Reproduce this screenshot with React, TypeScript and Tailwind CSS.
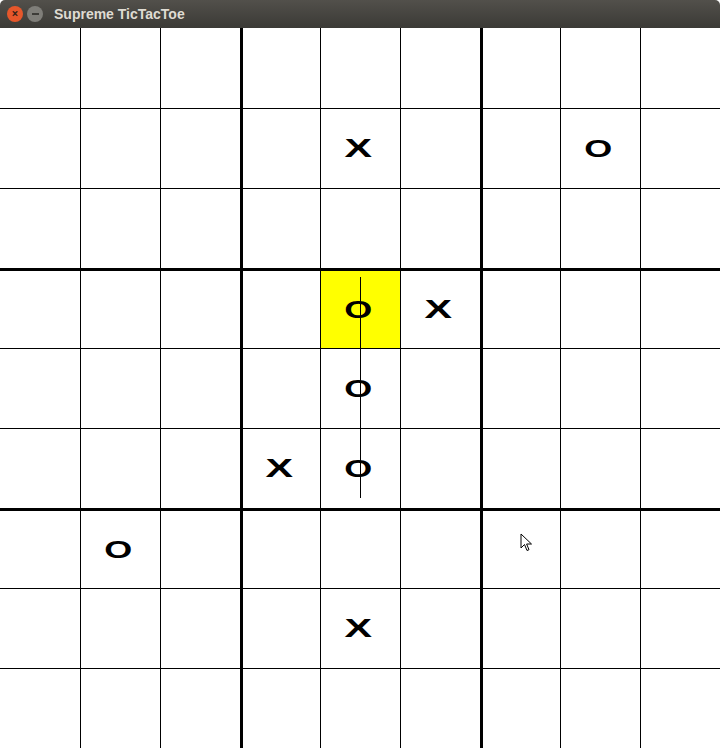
import React from 'react';

type Mark = 'X' | 'O' | null;

// board state, row by row
const BOARD: Mark[][] = [
  [null, null, null, null, null, null, null, null, null],
  [null, null, null, null, 'X', null, null, 'O', null],
  [null, null, null, null, null, null, null, null, null],
  [null, null, null, null, 'O', 'X', null, null, null],
  [null, null, null, null, 'O', null, null, null, null],
  [null, null, null, 'X', 'O', null, null, null, null],
  [null, 'O', null, null, null, null, null, null, null],
  [null, null, null, null, 'X', null, null, null, null],
  [null, null, null, null, null, null, null, null, null],
];

const HIGHLIGHT = { row: 3, col: 4 };

function leftBorder(col: number) {
  if (col === 0) return '';
  if (col === 3 || col === 6) return 'border-l-[3px]';
  return 'border-l';
}

function topBorder(row: number) {
  if (row === 0) return '';
  if (row === 3 || row === 6) return 'border-t-[3px]';
  return 'border-t';
}

function Piece({ mark }: { mark: Mark }) {
  if (mark === 'X') {
    return (
      <span className="mr-[5px] inline-block scale-x-[1.65] text-[25px] font-bold leading-none text-black font-['Liberation_Sans',sans-serif]">
        X
      </span>
    );
  }
  if (mark === 'O') {
    return (
      <span className="mr-[5px] inline-block scale-x-[1.5] text-[24px] font-bold leading-none text-black font-['Liberation_Sans',sans-serif]">
        O
      </span>
    );
  }
  return null;
}

function TitleBar() {
  return (
    <div className="flex h-[28px] items-center rounded-t-[5px] bg-gradient-to-b from-[#52504b] to-[#3b3a36] pl-[7px]">
      <div className="flex h-[16px] w-[16px] items-center justify-center rounded-full bg-[#e6572b] text-[12px] font-bold leading-none text-[#3a2418]">
        ×
      </div>
      <div className="ml-[4px] flex h-[16px] w-[16px] items-center justify-center rounded-full bg-[#7f7e79]">
        <div className="h-[2px] w-[7px] bg-[#3d3c38]" />
      </div>
      <span className="ml-[11px] text-[14px] font-bold text-[#dfdbd2] font-['Liberation_Sans',sans-serif]">
        Supreme TicTacToe
      </span>
    </div>
  );
}

function Cursor() {
  return (
    <svg
      className="absolute left-[520px] top-[505px]"
      width="13"
      height="20"
      viewBox="0 0 13 20"
    >
      <path
        d="M1 1 L1 15 L4.5 11.5 L7 17.5 L9 16.7 L6.6 11 L11.5 11 Z"
        fill="white"
        stroke="black"
        strokeWidth="1"
        strokeLinejoin="miter"
      />
    </svg>
  );
}

export default function App() {
  return (
    <div className="h-[748px] w-[720px] overflow-hidden bg-white">
      <TitleBar />
      <div className="relative">
        <div className="grid grid-cols-9">
          {BOARD.map((row, r) =>
            row.map((mark, c) => {
              const lit = r === HIGHLIGHT.row && c === HIGHLIGHT.col;
              return (
                <div
                  key={`${r}-${c}`}
                  className={`flex h-20 w-20 items-center justify-center border-black ${leftBorder(c)} ${topBorder(r)} ${
                    lit ? 'bg-[#ffff00]' : 'bg-white'
                  }`}
                >
                  <Piece mark={mark} />
                </div>
              );
            }),
          )}
        </div>
        {/* winning line */}
        <div className="absolute left-[360px] top-[249px] h-[221px] w-px bg-black" />
        <Cursor />
      </div>
    </div>
  );
}
